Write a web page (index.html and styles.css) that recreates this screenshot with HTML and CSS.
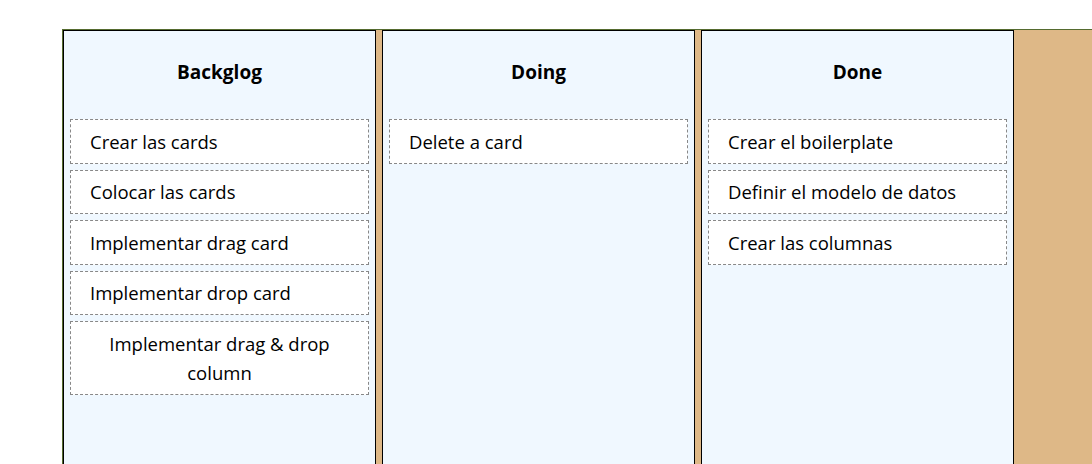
FILE: index.html
```html
<!DOCTYPE html>
<html lang="es">
<head>
<meta charset="utf-8">
<title>Board</title>
<link rel="stylesheet" href="styles.css">
</head>
<body>
<div class="board">
  <section class="column">
    <h3 class="column-title">Backglog</h3>
    <div class="card"><span>Crear las cards</span></div>
    <div class="card"><span>Colocar las cards</span></div>
    <div class="card"><span>Implementar drag card</span></div>
    <div class="card"><span>Implementar drop card</span></div>
    <div class="card"><span>Implementar drag &amp; drop column</span></div>
  </section>
  <section class="column">
    <h3 class="column-title">Doing</h3>
    <div class="card"><span>Delete a card</span></div>
  </section>
  <section class="column">
    <h3 class="column-title">Done</h3>
    <div class="card"><span>Crear el boilerplate</span></div>
    <div class="card"><span>Definir el modelo de datos</span></div>
    <div class="card"><span>Crear las columnas</span></div>
  </section>
</div>
</body>
</html>
```
FILE: styles.css
```css
html, body {
  margin: 0;
  padding: 0;
  overflow: hidden;
  background: #ffffff;
}
body {
  font-family: "Open Sans", "Noto Sans", sans-serif;
  font-size: 18.5px;
  color: #000;
}
.board {
  margin: 29px 0 0 62px;
  width: 1200px;
  height: 520px;
  background: #deb887;
  border-top: 1px solid #556b2f;
  border-left: 1px solid #556b2f;
  display: flex;
  gap: 6px;
  align-items: flex-start;
}
.column {
  width: 311px;
  min-height: 480px;
  background: #f0f8ff;
  border: 1px solid #000;
  display: flex;
  flex-direction: column;
  align-items: flex-start;
  gap: 6px;
}
.column-title {
  align-self: stretch;
  margin: 26px 0 26px;
  text-align: center;
  font-size: 19px;
  line-height: 30px;
  font-weight: 700;
}
.card {
  box-sizing: border-box;
  width: 299px;
  margin-left: 6px;
  padding: 6.5px 19px;
  background: #fff;
  border: 1px dashed #888;
  display: flex;
  line-height: 29.5px;
}
.card span {
  text-align: center;
}
```
